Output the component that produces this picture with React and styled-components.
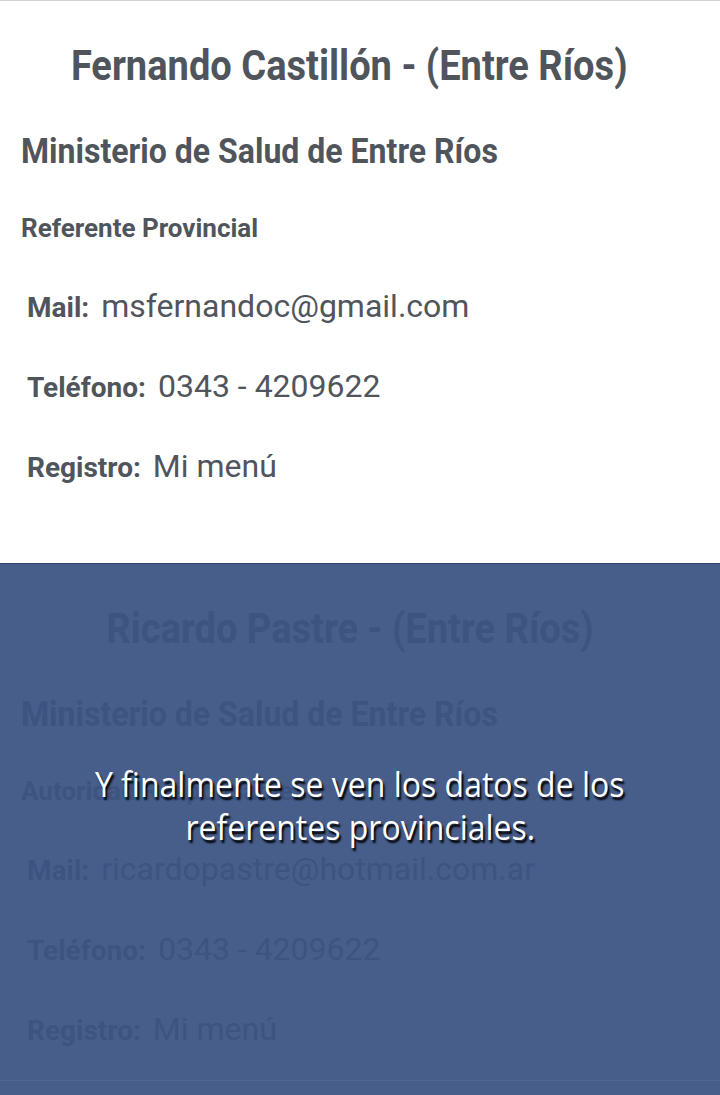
import React from "react";
import styled, { createGlobalStyle } from "styled-components";

const GlobalStyle = createGlobalStyle`
  html, body {
    margin: 0;
    padding: 0;
    background: #ffffff;
  }
  body {
    font-family: Roboto, "Noto Sans", sans-serif;
    color: #50555c;
  }
`;

const Screen = styled.div`
  position: relative;
  width: 720px;
  height: 1095px;
  overflow: hidden;
  border-top: 1px solid #d2d2d2;
  box-sizing: border-box;
`;

const Card = styled.section`
  height: 563px;
  box-sizing: border-box;
  padding: 40px 0 0 21px;
  display: flex;
  flex-direction: column;
`;

// the screenshot's larger type is a bit narrower than plain Roboto
const Squashed = styled.span`
  display: inline-block;
  white-space: nowrap;
  transform: scaleX(${({ $scale }) => $scale || 1});
  transform-origin: ${({ $center }) => ($center ? "center" : "left")};
`;

const Title = styled.h1`
  margin: 0 21px 0 -21px;
  text-align: center;
  font-size: 42px;
  line-height: 50px;
  font-weight: 700;
  color: #50555c;
`;

const Org = styled.h2`
  margin: 41px 0 0;
  font-size: 35px;
  line-height: 40px;
  font-weight: 700;
  color: #50555c;
`;

const Role = styled.h3`
  margin: 41px 0 0;
  font-size: 26px;
  line-height: 30px;
  font-weight: 700;
  color: #50555c;
`;

const Rows = styled.div`
  margin-top: 44px;
  padding-left: 6px;
  display: flex;
  flex-direction: column;
  gap: 40px;
`;

const Row = styled.div`
  height: 40px;
  display: flex;
  align-items: baseline;
`;

const Label = styled.span`
  font-size: 28px;
  font-weight: 700;
  color: #50555c;
`;

const Value = styled.span`
  font-size: 32px;
  font-weight: 400;
  color: #50555c;
  margin-left: 12px;
`;

const Overlay = styled.div`
  position: absolute;
  left: 0;
  right: 0;
  top: 562px;
  bottom: 0;
  background: rgba(60, 83, 131, 0.94);
  border-top: 1px solid rgba(40, 55, 100, 0.6);
  display: flex;
  justify-content: center;
  padding-top: 198px;
  box-sizing: border-box;
`;

const BottomEdge = styled.div`
  position: absolute;
  left: 0;
  right: 0;
  bottom: 14px;
  height: 1px;
  background: #4f6592;
`;

const Caption = styled.p`
  margin: 0;
  text-align: center;
  font-family: "Open Sans", Lato, sans-serif;
  font-size: 35px;
  line-height: 43px;
  color: #ffffff;
  text-shadow: 2px 3px 2px #000000;
`;

const people = [
  {
    name: "Fernando Castillón - (Entre Ríos)",
    org: "Ministerio de Salud de Entre Ríos",
    role: "Referente Provincial",
    mail: "msfernandoc@gmail.com",
    phone: "0343 - 4209622",
    registry: "Mi menú",
  },
  {
    name: "Ricardo Pastre - (Entre Ríos)",
    org: "Ministerio de Salud de Entre Ríos",
    role: "Autoridad Responsable",
    mail: "ricardopastre@hotmail.com.ar",
    phone: "0343 - 4209622",
    registry: "Mi menú",
  },
];

function InfoRow({ label, value }) {
  return (
    <Row>
      <Label>{label}</Label>
      <Value>{value}</Value>
    </Row>
  );
}

function PersonCard({ person }) {
  return (
    <Card>
      <Title>
        <Squashed $center $scale={0.906}>
          {person.name}
        </Squashed>
      </Title>
      <Org>
        <Squashed $scale={0.915}>{person.org}</Squashed>
      </Org>
      <Role>{person.role}</Role>
      <Rows>
        <InfoRow label="Mail:" value={person.mail} />
        <InfoRow label="Teléfono:" value={person.phone} />
        <InfoRow label="Registro:" value={person.registry} />
      </Rows>
    </Card>
  );
}

export default function App() {
  return (
    <>
      <GlobalStyle />
      <Screen>
        {people.map((p) => (
          <PersonCard key={p.name} person={p} />
        ))}
        <Overlay>
          <Caption>
            <Squashed $center $scale={0.914}>
              Y finalmente se ven los datos de los
            </Squashed>
            <br />
            <Squashed $center $scale={0.914}>
              referentes provinciales.
            </Squashed>
          </Caption>
          <BottomEdge />
        </Overlay>
      </Screen>
    </>
  );
}
